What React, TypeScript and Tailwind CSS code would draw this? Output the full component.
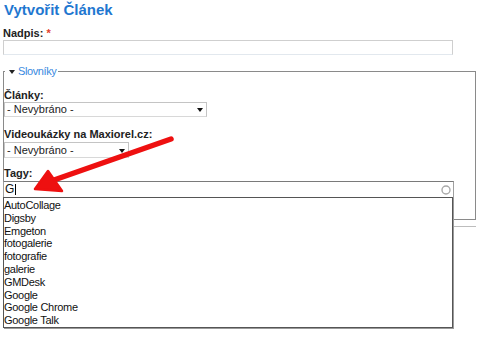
import type { ReactNode } from 'react'

const tags = [
  'AutoCollage',
  'Digsby',
  'Emgeton',
  'fotogalerie',
  'fotografie',
  'galerie',
  'GMDesk',
  'Google',
  'Google Chrome',
  'Google Talk',
]

function Label({ children, className = '' }: { children: ReactNode; className?: string }) {
  return <div className={`text-[11px] leading-[13px] font-bold text-[#222] ${className}`}>{children}</div>
}

function FakeSelect({ width, className = '' }: { width: string; className?: string }) {
  return (
    <div
      className={`flex items-center justify-between border border-[#c4c4c4] border-b-[#d8d8d8] bg-white pl-[2px] pr-[3px] text-[11px] leading-[13px] text-[#222] ${width} ${className}`}
    >
      <span>- Nevybráno -</span>
      <svg width="6" height="4" viewBox="0 0 6 4" className="mt-[1px]">
        <path d="M0 0h6L3 4z" fill="#111" />
      </svg>
    </div>
  )
}

export default function App() {
  return (
    <div className="relative w-[480px] h-[338px] overflow-hidden bg-white font-['Liberation_Sans',Arial,sans-serif]">
      <h1 className="mt-[1px] pl-[4px] text-[15px] leading-[18px] font-bold text-[#1f77d0]">Vytvořit Článek</h1>

      <Label className="mt-[8px] pl-[3px]">
        Nadpis: <span className="text-[#e2402c]">*</span>
      </Label>
      <div className="ml-[3px] h-[15px] w-[450px] border border-[#cfcfcf] border-b-[#e2e8ee]" />

      <fieldset className="mt-[10px] ml-[3px] w-[473px] border border-[#8a8a8a] pb-[21px]">
        <legend className="ml-[1px] flex items-center pl-[4px] pr-[2px] text-[11px] leading-[13px] tracking-[-0.4px] text-[#3a8ae0]">
          <svg width="6" height="4" viewBox="0 0 6 4" className="mr-[3px]">
            <path d="M0 0h6L3 4z" fill="#222" />
          </svg>
          Slovníky
        </legend>

        <Label className="mt-[11px]">Články:</Label>
        <FakeSelect width="w-[203px] h-[15px]" />

        <Label className="mt-[11px]">Videoukázky na Maxiorel.cz:</Label>
        <FakeSelect width="w-[125px] h-[16px]" className="mt-[1px]" />

        <Label className="mt-[9px]">Tagy:</Label>
        <div className="-ml-px mt-[1px] flex h-[17px] w-[451px] items-center justify-between border border-[#a0a0a0] border-t-[#7a7a7a] pl-[1px] pr-[2px]">
          <div className="flex items-center text-[12px] leading-[15px] text-[#111]">
            G<span className="ml-[1px] h-[11px] w-px bg-black" />
          </div>
          <svg width="10" height="10" viewBox="0 0 10 10">
            <circle cx="5" cy="5" r="4" fill="none" stroke="#a8a8a8" strokeWidth="1.4" />
          </svg>
        </div>
      </fieldset>

      <div className="mt-[6px] ml-[3px] h-px w-[473px] bg-[#bdbdbd]" />

      {/* autocomplete popup */}
      <ul className="absolute left-[3px] top-[197px] h-[131px] w-[450px] border border-[#555] bg-white pt-[1px] shadow-[1px_1px_0_#9a9a9a] text-[11px] leading-[12.8px] tracking-[-0.3px] text-[#111]">
        {tags.map((t) => (
          <li key={t}>{t}</li>
        ))}
      </ul>

      {/* red annotation arrow */}
      <svg className="absolute left-0 top-0 pointer-events-none" width="480" height="338" viewBox="0 0 480 338">
        <path d="M171 139L54 180" stroke="#ee1010" strokeWidth="5.5" strokeLinecap="round" fill="none" />
        <path d="M35 189L48 171L62 191Z" fill="#ee1010" stroke="#ee1010" strokeWidth="2.5" strokeLinejoin="round" />
      </svg>
    </div>
  )
}
